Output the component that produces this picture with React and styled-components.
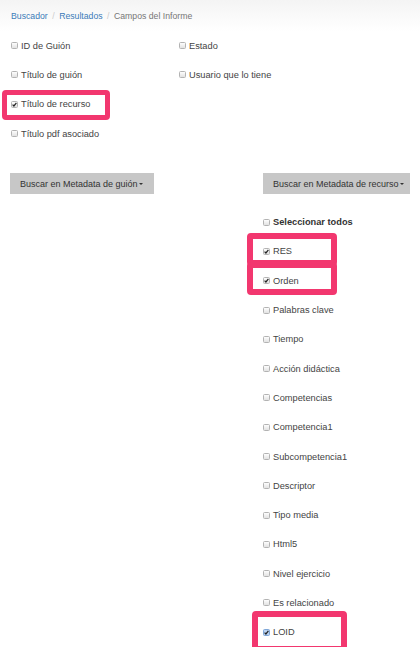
import React from 'react';
import styled, { createGlobalStyle } from 'styled-components';

const GlobalStyle = createGlobalStyle`
  html, body {
    margin: 0;
    padding: 0;
    background: #ffffff;
    overflow: hidden;
  }
`;

const ROW = '29.3px';

const Page = styled.div`
  width: 420px;
  font-family: "Liberation Sans", Arial, Helvetica, sans-serif;
  color: #444444;
`;

const Breadcrumb = styled.nav`
  height: 31px;
  display: flex;
  align-items: center;
  padding-left: 11px;
  font-size: 8.7px;
  background: linear-gradient(#f4f4f4, #ffffff);
`;

const Crumb = styled.a`
  color: ${(p) => (p.$active ? '#777777' : '#3b7bb8')};
  text-decoration: none;
`;

const Sep = styled.span`
  color: #cccccc;
  padding: 0 4.5px;
`;

const FieldGrid = styled.div`
  display: grid;
  grid-template-columns: 168px 1fr;
  grid-auto-rows: ${ROW};
  padding-left: 11px;
`;

const Row = styled.label`
  position: relative;
  display: flex;
  align-items: center;
  height: ${ROW};
  font-size: 9.25px;
  font-weight: ${(p) => (p.$bold ? 700 : 400)};
  color: ${(p) => (p.$bold ? '#333333' : '#444444')};
`;

const Box = styled.span`
  display: inline-flex;
  align-items: center;
  justify-content: center;
  box-sizing: border-box;
  width: 7px;
  height: 7px;
  margin-right: 3px;
  border: 1px solid ${(p) => (p.$focus ? '#7fa7d8' : '#b3b3b3')};
  border-radius: 1.5px;
  background: ${(p) =>
    p.$focus ? '#b9d2f2' : 'linear-gradient(#fdfdfd, #e2e2e2)'};
  svg {
    display: block;
  }
`;

const Highlight = styled.span`
  position: absolute;
  left: ${(p) => p.$left}px;
  top: ${(p) => p.$top}px;
  width: ${(p) => p.$w}px;
  height: ${(p) => p.$h}px;
  box-sizing: border-box;
  border: ${(p) => p.$b}px solid #f2376f;
  border-radius: 4px;
  pointer-events: none;
`;

const Columns = styled.div`
  display: flex;
  justify-content: space-between;
  align-items: flex-start;
  padding: 0 10px;
  margin-top: 25px;
`;

const Column = styled.div`
  display: flex;
  flex-direction: column;
  width: ${(p) => p.$width}px;
`;

const DropButton = styled.button`
  display: flex;
  align-items: center;
  box-sizing: border-box;
  width: 100%;
  height: 21px;
  padding: 0 0 0 10px;
  border: none;
  border-radius: 0;
  background: #c7c7c7;
  color: #333333;
  font-family: inherit;
  font-size: 9px;
  white-space: nowrap;
  cursor: pointer;
`;

const Caret = styled.span`
  width: 0;
  height: 0;
  margin-left: 1px;
  margin-top: 1px;
  border-top: 2.5px solid #333333;
  border-left: 2.5px solid transparent;
  border-right: 2.5px solid transparent;
`;

const List = styled.div`
  display: flex;
  flex-direction: column;
  margin-top: 13.3px;
`;

const Check = () => (
  <svg width="5" height="5" viewBox="0 0 5 5">
    <path d="M0.6 2.7 L1.9 4 L4.4 0.9" fill="none" stroke="#222" strokeWidth="1.2" />
  </svg>
);

const Field = ({ label, checked, focus, bold, mark }) => (
  <Row $bold={bold}>
    <Box $focus={focus}>{checked && <Check />}</Box>
    {label}
    {mark && <Highlight $left={mark[0]} $top={mark[1]} $w={mark[2]} $h={mark[3]} $b={mark[4]} />}
  </Row>
);

const resourceFields = [
  { label: 'Seleccionar todos', bold: true },
  { label: 'RES', checked: true, mark: [-16, -3.6, 90, 33, 6.5] },
  { label: 'Orden', checked: true, mark: [-16, -3.9, 90, 33, 6.5] },
  { label: 'Palabras clave' },
  { label: 'Tiempo' },
  { label: 'Acción didáctica' },
  { label: 'Competencias' },
  { label: 'Competencia1' },
  { label: 'Subcompetencia1' },
  { label: 'Descriptor' },
  { label: 'Tipo media' },
  { label: 'Html5' },
  { label: 'Nivel ejercicio' },
  { label: 'Es relacionado' },
  { label: 'LOID', checked: true, focus: true, mark: [-11, -6.5, 95, 41, 6.5] },
];

const App = () => (
  <Page>
    <GlobalStyle />
    <Breadcrumb>
      <Crumb href="#">Buscador</Crumb>
      <Sep>/</Sep>
      <Crumb href="#">Resultados</Crumb>
      <Sep>/</Sep>
      <Crumb $active>Campos del Informe</Crumb>
    </Breadcrumb>

    <FieldGrid>
      <Field label="ID de Guión" />
      <Field label="Estado" />
      <Field label="Título de guión" />
      <Field label="Usuario que lo tiene" />
      <Field label="Título de recurso" checked mark={[-9, 0.4, 108, 30, 5.5]} />
      <span />
      <Field label="Título pdf asociado" />
    </FieldGrid>

    <Columns>
      <Column $width={144}>
        <DropButton>
          Buscar en Metadata de guión<Caret />
        </DropButton>
      </Column>
      <Column $width={147}>
        <DropButton>
          Buscar en Metadata de recurso<Caret />
        </DropButton>
        <List>
          {resourceFields.map((f) => (
            <Field key={f.label} {...f} />
          ))}
        </List>
      </Column>
    </Columns>
  </Page>
);

export default App;
